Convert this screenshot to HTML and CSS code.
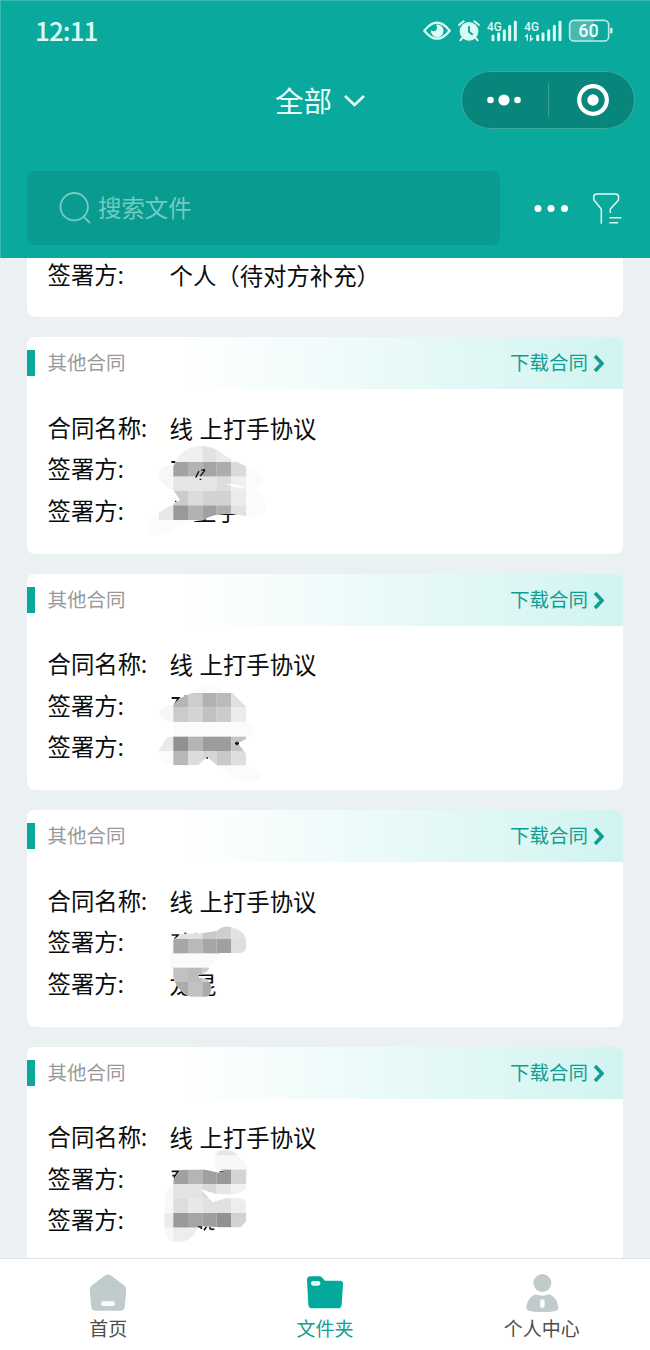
FILE: index.html
```html
<!DOCTYPE html>
<html lang="zh-CN">
<head>
    <meta charset="UTF-8">
    <meta name="viewport" content="width=device-width, initial-scale=1.0">
    <title>文件夹</title>
    <link rel="stylesheet" href="styles.css">
</head>
<body>
    <header class="header">
        <div class="status-bar">
            <span class="time">12:11</span>
            <svg class="status-icons" viewBox="39 54 573 78">
                <!-- eye -->
                <path d="M43 92 Q81 44 119 92 Q81 140 43 92Z" fill="none" stroke="#dcfaf5" stroke-width="7"/>
                <path d="M78 74 A19 19 0 1 1 63 90 Q75 99 80 88 Q83 80 78 74Z" fill="#dcfaf5"/>
                <!-- alarm -->
                <circle cx="177" cy="94" r="28" fill="#dcfaf5"/>
                <path d="M147 75 L161 64 M207 75 L193 64 M158 113 L151 121 M196 113 L203 121" stroke="#dcfaf5" stroke-width="6" stroke-linecap="round"/>
                <path d="M177 79 V95 L188 104" fill="none" stroke="#0aa99d" stroke-width="6"/>
                <!-- signal -->
                <text x="231" y="92" class="net" textLength="44" lengthAdjust="spacingAndGlyphs">4G</text>
                <path d="M249 108V119 M266 101V119 M283 92V119 M299 79V119 M316 66V119" class="bars"/>
                <text x="343" y="92" class="net" textLength="44" lengthAdjust="spacingAndGlyphs">4G</text>
                <path d="M383 108V119 M399 101V119 M416 92V119 M433 79V119 M450 66V119" class="bars"/>
                <path d="M345 111 L352 105 V122 M369 115 L362 121 V105" fill="none" stroke="#dcfaf5" stroke-width="4"/>
                <!-- battery -->
                <path d="M491 61 H552 V123 H491 Q479 123 479 111 V73 Q479 61 491 61Z" fill="#48b9af"/>
                <rect x="479" y="61" width="117" height="62" rx="13" fill="none" stroke="#b9ece6" stroke-width="5"/>
                <path d="M604 87V97" stroke="#dcfaf5" stroke-width="7" stroke-linecap="round"/>
                <text x="505" y="112" class="percent" textLength="61" lengthAdjust="spacingAndGlyphs">60</text>
            </svg>
        </div>
        <div class="nav-bar">
            <div class="nav-title">
                <span>全部</span>
                <svg width="24" height="16" viewBox="0 0 24 16"><path d="M3 4 L12.5 13 L22 4" fill="none" stroke="#e9fffc" stroke-width="2.6"/></svg>
            </div>
            <div class="capsule">
                <svg width="36" height="12" viewBox="0 0 36 12" fill="#fff"><circle cx="4.5" cy="6" r="3.3"/><circle cx="18" cy="6" r="5.6"/><circle cx="31.5" cy="6" r="3.3"/></svg>
                <span class="divider"></span>
                <svg width="32" height="32" viewBox="0 0 32 32"><circle cx="16" cy="16" r="13.8" fill="none" stroke="#fff" stroke-width="4.2"/><circle cx="16" cy="16" r="5.7" fill="#fff"/></svg>
            </div>
        </div>
        <div class="search-bar">
            <div class="search-box">
                <svg width="32" height="32" viewBox="0 0 32 32" fill="none" stroke="#72ccc5" stroke-width="1.8"><circle cx="15.2" cy="14.7" r="13.7"/><path d="M24 24 L31 31"/></svg>
                <span>搜索文件</span>
            </div>
            <svg class="more" width="36" height="8" viewBox="0 0 36 8" fill="#fff"><circle cx="5" cy="4.5" r="3.5"/><circle cx="18" cy="4.5" r="3.5"/><circle cx="31.5" cy="4.5" r="3.5"/></svg>
            <svg class="filter" width="30" height="32" viewBox="0 0 90 96" fill="none" stroke="#e4fbf8" stroke-width="4.5"><path d="M28 95 V51 L8 27 Q5 23 5 17 Q5 6 15 6 H70 Q80 6 80 17 Q80 23 77 27 L55 51 V63 M52 77 H88 M52 92 H78"/></svg>
        </div>
    </header>

    <main class="list">
        <section class="card card-first">
            <div class="row"><span class="label">签署方<i>：</i></span><span>个人（待对方补充）</span></div>
        </section>

        <section class="card">
            <div class="card-head">
                <span class="type">其他合同</span>
                <span class="download">下载合同<svg width="11" height="18" viewBox="0 0 11 18"><path d="M2 2 L9 9.5 L2 17"/></svg></span>
            </div>
            <div class="card-body">
                <div class="row"><span class="label">合同名称<i>：</i></span><span>线 上打手协议</span></div>
                <div class="row"><span class="label">签署方<i>：</i></span></div>
                <div class="row"><span class="label">签署方<i>：</i></span><span class="name">　王手</span></div>
            </div>
            <svg class="mosaic mosaic-1" viewBox="0 0 600 420">
                <clipPath id="blob1"><path d="M130 170 Q150 110 215 108 Q255 108 290 140 L340 165 Q405 190 398 220 L375 240 Q415 265 410 300 Q390 325 340 317 L304 311 Q250 310 220 330 L150 340 Q110 385 65 375 Q40 350 65 325 L87 307 L150 270 L130 240 Q85 225 87 190 Q90 165 130 165Z"/></clipPath>
                <path d="M124 156H146" stroke="#111" stroke-width="6"/>
                <g clip-path="url(#blob1)">
                    <rect width="600" height="420" fill="#fbfbfb"/>
                    <rect x="87" y="156" width="43" height="87" fill="#f7f7f7"/>
                    <rect x="130" y="100" width="87" height="56" fill="#f0f0f0"/>
                    <rect x="217" y="100" width="43" height="56" fill="#e2e2e2"/>
                    <rect x="260" y="100" width="44" height="56" fill="#ebebeb"/>
                    <rect x="130" y="156" width="44" height="44" fill="#a2a2a2"/>
                    <rect x="174" y="156" width="43" height="44" fill="#b3b3b3"/>
                    <rect x="217" y="156" width="43" height="44" fill="#a5a5a5"/>
                    <rect x="260" y="156" width="44" height="44" fill="#adadad"/>
                    <rect x="304" y="156" width="44" height="44" fill="#dadada"/>
                    <rect x="130" y="200" width="130" height="43" fill="#e5e5e5"/>
                    <rect x="260" y="200" width="44" height="43" fill="#ddd"/>
                    <rect x="304" y="200" width="44" height="43" fill="#f0f0f0"/>
                    <rect x="130" y="243" width="44" height="43" fill="#cbcbcb"/>
                    <rect x="174" y="243" width="43" height="43" fill="#dcdcdc"/>
                    <rect x="217" y="243" width="87" height="43" fill="#d2d2d2"/>
                    <rect x="304" y="243" width="44" height="43" fill="#ebebeb"/>
                    <rect x="87" y="286" width="43" height="44" fill="#e7e7e7"/>
                    <rect x="130" y="286" width="44" height="44" fill="#999"/>
                    <rect x="174" y="286" width="43" height="44" fill="#b2b2b2"/>
                    <rect x="217" y="286" width="43" height="44" fill="#a0a0a0"/>
                    <rect x="260" y="286" width="44" height="44" fill="#b0b0b0"/>
                    <rect x="304" y="286" width="44" height="44" fill="#e2e2e2"/>
                </g>
                <path d="M290 221 Q320 220 344 233 Q315 235 290 221Z" fill="#fff"/>
                <path d="M197 203L207 183 M214 181Q228 175 222 184L211 198 M209 208L214 208 M135 274H139" fill="none" stroke="#111" stroke-width="4"/>
            </svg>
        </section>

        <section class="card">
            <div class="card-head">
                <span class="type">其他合同</span>
                <span class="download">下载合同<svg width="11" height="18" viewBox="0 0 11 18"><path d="M2 2 L9 9.5 L2 17"/></svg></span>
            </div>
            <div class="card-body">
                <div class="row"><span class="label">合同名称<i>：</i></span><span>线 上打手协议</span></div>
                <div class="row"><span class="label">签署方<i>：</i></span></div>
                <div class="row"><span class="label">签署方<i>：</i></span></div>
            </div>
            <svg class="mosaic mosaic-2" viewBox="0 0 600 420">
                <clipPath id="blob2"><path d="M130 164 L150 145 L185 129 Q240 85 290 125 L308 130 L348 170 V214 Q375 220 372 245 Q365 262 348 262 V267 L324 280 L348 312 V345 Q400 365 388 390 Q330 400 290 370 L260 345 L231 320 L205 346 H130 Q85 340 87 300 L112 262 L130 255 V216 Q90 215 87 190 Q95 160 130 164Z"/></clipPath>
                <path d="M125 144H146L134 164 M163 140L169 139" fill="none" stroke="#111" stroke-width="6"/>
                <g clip-path="url(#blob2)">
                    <rect width="600" height="420" fill="#fbfbfb"/>
                    <rect x="87" y="129" width="43" height="87" fill="#f7f7f7"/>
                    <rect x="130" y="129" width="44" height="44" fill="#b5b5b5"/>
                    <rect x="174" y="129" width="43" height="44" fill="#cdcdcd"/>
                    <rect x="217" y="129" width="43" height="44" fill="#b1b1b1"/>
                    <rect x="260" y="129" width="44" height="44" fill="#bababa"/>
                    <rect x="304" y="129" width="44" height="44" fill="#e0e0e0"/>
                    <rect x="130" y="173" width="44" height="43" fill="#cbcbcb"/>
                    <rect x="174" y="173" width="43" height="43" fill="#d4d4d4"/>
                    <rect x="217" y="173" width="43" height="43" fill="#c1c1c1"/>
                    <rect x="260" y="173" width="44" height="43" fill="#cbcbcb"/>
                    <rect x="304" y="173" width="44" height="43" fill="#ececec"/>
                    <rect x="87" y="260" width="43" height="43" fill="#e9e9e9"/>
                    <rect x="130" y="260" width="44" height="43" fill="#919191"/>
                    <rect x="174" y="260" width="43" height="43" fill="#b5b5b5"/>
                    <rect x="217" y="260" width="87" height="43" fill="#9c9c9c"/>
                    <rect x="304" y="260" width="44" height="43" fill="#c4c4c4"/>
                    <rect x="130" y="303" width="44" height="43" fill="#b8b8b8"/>
                    <rect x="174" y="303" width="43" height="43" fill="#dcdcdc"/>
                    <rect x="217" y="303" width="43" height="43" fill="#d5d5d5"/>
                    <rect x="260" y="303" width="44" height="43" fill="#c8c8c8"/>
                    <rect x="304" y="303" width="44" height="43" fill="#dedede"/>
                </g>
                <path d="M315 280H327 M321 275V286 M229 324H234" stroke="#111" stroke-width="5"/>
            </svg>
        </section>

        <section class="card">
            <div class="card-head">
                <span class="type">其他合同</span>
                <span class="download">下载合同<svg width="11" height="18" viewBox="0 0 11 18"><path d="M2 2 L9 9.5 L2 17"/></svg></span>
            </div>
            <div class="card-body">
                <div class="row"><span class="label">合同名称<i>：</i></span><span>线 上打手协议</span></div>
                <div class="row"><span class="label">签署方<i>：</i></span></div>
                <div class="row"><span class="label">签署方<i>：</i></span><span class="name">龙昆</span></div>
            </div>
            <svg class="mosaic mosaic-3" viewBox="0 0 600 420">
                <clipPath id="blob3"><path d="M130 165 L155 147 L217 145 L262 137 Q280 120 304 126 Q350 140 348 170 V190 Q345 204 325 204 H270 Q260 225 238 240 V250 Q230 265 205 271 V280 Q230 272 242 300 Q248 320 235 334 Q210 345 180 335 Q145 320 132 285 L120 245 Q115 190 130 165Z"/></clipPath>
                <path d="M125 150H144L134 162 M163 146L169 145 M197 147L201 146" fill="none" stroke="#111" stroke-width="5"/>
                <g clip-path="url(#blob3)">
                    <rect width="600" height="420" fill="#fafafa"/>
                    <rect x="130" y="110" width="87" height="52" fill="#e1e1e1"/>
                    <rect x="217" y="110" width="43" height="52" fill="#c9c9c9"/>
                    <rect x="260" y="110" width="44" height="52" fill="#cecece"/>
                    <rect x="304" y="110" width="44" height="52" fill="#e3e3e3"/>
                    <rect x="130" y="162" width="44" height="43" fill="#a6a6a6"/>
                    <rect x="174" y="162" width="43" height="43" fill="#b9b9b9"/>
                    <rect x="217" y="162" width="43" height="43" fill="#a6a6a6"/>
                    <rect x="260" y="162" width="44" height="43" fill="#a0a0a0"/>
                    <rect x="304" y="162" width="44" height="43" fill="#dfdfdf"/>
                    <rect x="130" y="248" width="44" height="43" fill="#c1c1c1"/>
                    <rect x="174" y="248" width="43" height="43" fill="#bcbcbc"/>
                    <rect x="217" y="248" width="43" height="43" fill="#ccc"/>
                    <rect x="130" y="291" width="44" height="44" fill="#acacac"/>
                    <rect x="174" y="291" width="43" height="44" fill="#c1c1c1"/>
                    <rect x="217" y="291" width="43" height="44" fill="#aaa"/>
                </g>
            </svg>
        </section>

        <section class="card">
            <div class="card-head">
                <span class="type">其他合同</span>
                <span class="download">下载合同<svg width="11" height="18" viewBox="0 0 11 18"><path d="M2 2 L9 9.5 L2 17"/></svg></span>
            </div>
            <div class="card-body">
                <div class="row"><span class="label">合同名称<i>：</i></span><span>线 上打手协议</span></div>
                <div class="row"><span class="label">签署方<i>：</i></span></div>
                <div class="row"><span class="label">签署方<i>：</i></span></div>
            </div>
            <svg class="mosaic mosaic-4" viewBox="0 0 600 420">
                <clipPath id="blob4"><path d="M130 180 L150 150 L217 147 L265 158 L285 154 L260 145 Q240 105 275 90 Q310 85 325 110 Q360 130 353 165 L348 205 Q330 225 290 223 L260 222 L211 207 L248 247 L290 234 H335 Q352 240 348 270 V304 L332 322 H270 L205 318 L190 345 Q175 368 135 366 Q105 360 103 330 V250 Q105 205 130 192Z"/></clipPath>
                <path d="M125 154H145L135 167H127 M134 167V184 M268 157L284 155" fill="none" stroke="#111" stroke-width="5"/>
                <path d="M203 320H214V327 M222 331L230 319 M240 320Q238 331 253 327" fill="none" stroke="#111" stroke-width="5"/>
                <g clip-path="url(#blob4)">
                    <rect width="600" height="420" fill="#f8f8f8"/>
                    <rect x="250" y="85" width="98" height="21" fill="#e7e7e7"/>
                    <rect x="130" y="149" width="44" height="43" fill="#a0a0a0"/>
                    <rect x="174" y="149" width="43" height="43" fill="#b5b5b5"/>
                    <rect x="217" y="149" width="43" height="43" fill="#a0a0a0"/>
                    <rect x="260" y="149" width="44" height="43" fill="#999"/>
                    <rect x="304" y="149" width="44" height="43" fill="#d4d4d4"/>
                    <rect x="130" y="192" width="87" height="43" fill="#e3e3e3"/>
                    <rect x="217" y="192" width="43" height="43" fill="#d8d8d8"/>
                    <rect x="260" y="192" width="44" height="43" fill="#e6e6e6"/>
                    <rect x="304" y="192" width="44" height="43" fill="#f2f2f2"/>
                    <rect x="130" y="235" width="44" height="44" fill="#ddd"/>
                    <rect x="174" y="235" width="43" height="44" fill="#e8e8e8"/>
                    <rect x="217" y="235" width="87" height="44" fill="#e1e1e1"/>
                    <rect x="304" y="235" width="44" height="44" fill="#ededed"/>
                    <rect x="100" y="279" width="30" height="44" fill="#ececec"/>
                    <rect x="130" y="279" width="44" height="44" fill="#999"/>
                    <rect x="174" y="279" width="43" height="44" fill="#a5a5a5"/>
                    <rect x="217" y="279" width="43" height="44" fill="#9e9e9e"/>
                    <rect x="260" y="279" width="44" height="44" fill="#919191"/>
                    <rect x="304" y="279" width="44" height="44" fill="#d2d2d2"/>
                    <rect x="130" y="323" width="87" height="45" fill="#ededed"/>
                </g>
            </svg>
        </section>
    </main>

    <nav class="tab-bar">
        <div class="tab">
            <svg width="38" height="38" viewBox="0 0 114 114">
                <path d="M47 5 Q57 -2 67 5 L105 34 Q112 39 112 48 L107 98 Q106 110 94 110 H20 Q8 110 7 98 L2 48 Q2 39 9 34Z" fill="#c0cbcb"/>
                <rect x="36" y="82" width="42" height="14" rx="7" fill="#f7fcfb"/>
            </svg>
            <span>首页</span>
        </div>
        <div class="tab active">
            <svg width="38" height="38" viewBox="0 0 114 114">
                <path d="M3 18 Q3 7 14 7 H40 Q45 7 49 11 L57 20 H102 Q112 20 111 31 L107 92 Q106 103 95 103 H19 Q8 103 7 92Z" fill="#03aa9c"/>
                <rect x="15" y="21" width="28" height="14" rx="7" fill="#eafaf8"/>
            </svg>
            <span>文件夹</span>
        </div>
        <div class="tab">
            <svg width="38" height="38" viewBox="0 0 114 114">
                <circle cx="58" cy="27" r="27" fill="#c0cbcb"/>
                <path d="M36 61 Q58 69 80 61 Q103 74 106 99 Q107 108 96 111 Q58 119 20 111 Q9 108 10 99 Q13 74 36 61Z" fill="#c0cbcb"/>
                <rect x="51" y="76" width="14" height="26" rx="7" fill="#f7fcfb"/>
            </svg>
            <span>个人中心</span>
        </div>
    </nav>
</body>
</html>
```
FILE: styles.css
```css
* {
    box-sizing: border-box;
}

body {
    margin: 0;
    height: 1350px;
    display: flex;
    flex-direction: column;
    overflow: hidden;
    background: #ebf1f2;
    color: #0c0c0c;
    font-family: "Noto Sans CJK SC", sans-serif;
}

svg {
    display: block;
    flex: none;
}

.header {
    flex: none;
    height: 258px;
    background: #0aa99d;
    box-shadow: inset 1px 1px 0 #38bab0;
}

.status-bar {
    display: flex;
    justify-content: space-between;
    align-items: center;
    height: 62px;
    padding: 0 36px 0 35px;
}

.time {
    color: #dcfaf5;
    font-size: 26px;
    font-weight: 500;
    letter-spacing: -0.9px;
    line-height: 60px;
    height: 62px;
}

.status-icons {
    width: 191px;
    height: 26px;
}

.net {
    font: 500 37px Roboto, sans-serif;
    fill: #dcfaf5;
}

.bars {
    stroke: #dcfaf5;
    stroke-width: 9;
    stroke-linecap: round;
}

.percent {
    font: 500 56px Roboto, sans-serif;
    fill: #effffd;
}

.nav-bar {
    display: flex;
    justify-content: space-between;
    align-items: center;
    height: 76px;
    padding: 0 15px 0 275px;
}

.nav-title {
    display: flex;
    align-items: center;
    gap: 10px;
    color: #e9fffc;
    font-size: 28.5px;
    line-height: 40px;
    padding-bottom: 1px;
}

.capsule {
    display: flex;
    align-items: center;
    width: 174px;
    height: 58px;
    padding: 0 24px;
    border: 1.5px solid #3da9a0;
    border-radius: 29px;
    background: #09867b;
}

.divider {
    width: 1px;
    height: 34px;
    margin: 0 28px 0 26px;
    background: #3f9f96;
}

.search-bar {
    display: flex;
    align-items: center;
    height: 74px;
    margin-top: 33px;
    padding-left: 27px;
}

.search-box {
    display: flex;
    align-items: center;
    gap: 7px;
    width: 473px;
    height: 74px;
    padding: 0 0 2px 32px;
    border-radius: 8px;
    background: #099b8f;
    color: #72ccc5;
    font-size: 23.4px;
    line-height: 30px;
}

.search-box svg {
    margin-top: 2px;
}

.more {
    margin-left: 33px;
}

.filter {
    margin-left: 23px;
}

.list {
    flex: 1;
    min-height: 0;
    overflow: hidden;
    padding: 0 27px;
}

.card {
    position: relative;
    height: 216.5px;
    margin-bottom: 20px;
    border-radius: 8px;
    background: #fff;
    overflow: hidden;
}

.card-first {
    height: 59px;
    padding: 0 20.5px;
    border-radius: 0 0 8px 8px;
}

.card-first .row {
    height: 34px;
}

.card-head {
    display: flex;
    align-items: center;
    height: 52px;
    padding-right: 19px;
    background: linear-gradient(90deg, #fff 26%, #d1f4f1);
    font-size: 19.5px;
    line-height: 28px;
}

.card-head::before {
    content: "";
    width: 8px;
    height: 26px;
    margin-right: 12.5px;
    background: #0aa99d;
}

.type {
    flex: 1;
    color: #999;
    padding-bottom: 2px;
}

.download {
    display: flex;
    align-items: center;
    gap: 5px;
    padding-bottom: 2px;
    color: #109e92;
}

.download svg {
    margin-top: 2px;
}

.download path {
    fill: none;
    stroke: #109e92;
    stroke-width: 3.6;
}

.card-body {
    padding: 18px 20.5px 0;
}

.row {
    display: flex;
    align-items: center;
    height: 41.6px;
    font-size: 23.4px;
    line-height: 34px;
    white-space: pre;
    word-spacing: 1.4px;
}

.label {
    width: 122px;
}

.label i {
    margin-left: -2px;
    font-size: 20px;
    font-style: normal;
}

/* pixelated cover over the signer names */
.mosaic {
    position: absolute;
    left: 103px;
    width: 200px;
    height: 140px;
}

.mosaic-1 {
    top: 73px;
}

.mosaic-2 {
    top: 76.5px;
}

.mosaic-3 {
    top: 75px;
}

.mosaic-4 {
    top: 73.5px;
}

.tab-bar {
    flex: none;
    display: flex;
    height: 92px;
    border-top: 1px solid #dfe2e2;
    background: #fff;
}

.tab {
    flex: 1;
    display: flex;
    flex-direction: column;
    align-items: center;
    padding-top: 15px;
    color: #4d4d4d;
    font-size: 19px;
    line-height: 31px;
}

.tab.active {
    color: #109e92;
}
```
